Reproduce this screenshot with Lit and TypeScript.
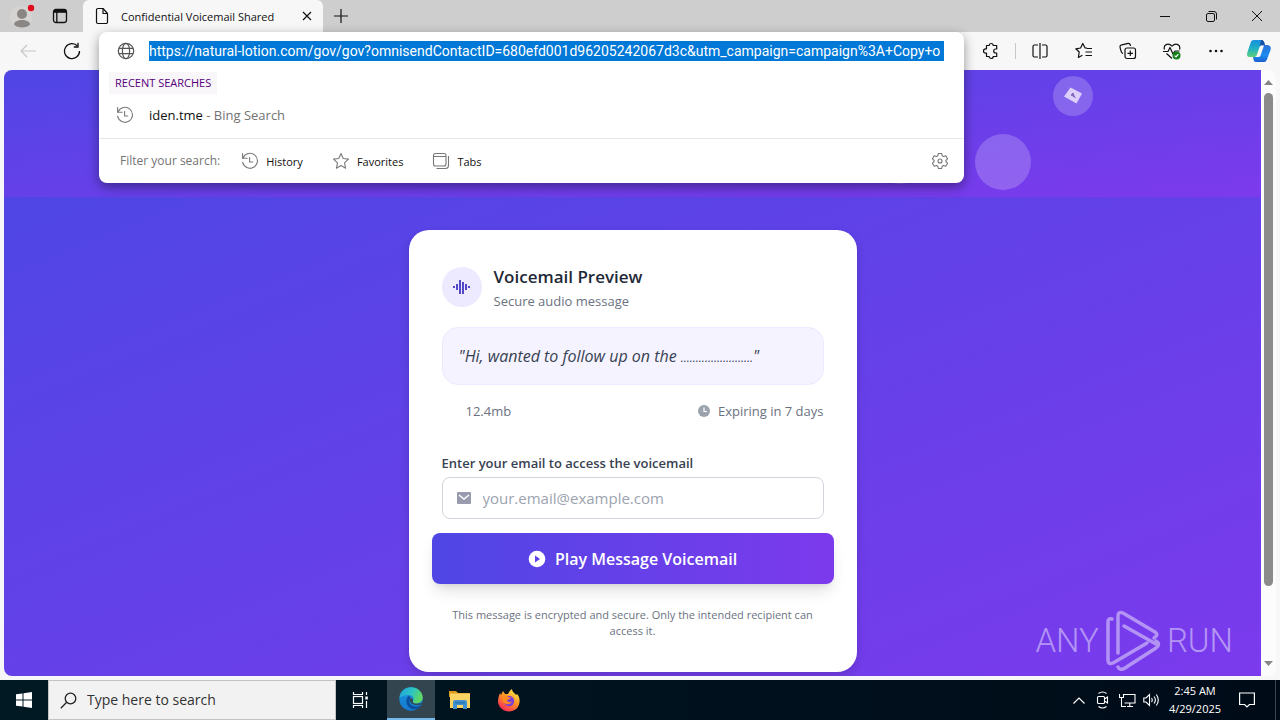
import { LitElement, html, css, svg } from "lit";
import { customElement } from "lit/decorators.js";

const historyIcon = () => svg`<svg viewBox="0 0 18 18" width="18" height="18" fill="none" stroke="#7a7a7a" stroke-width="1.1" stroke-linecap="round" stroke-linejoin="round"><path d="M1.6 1.6V6.200h4.600"/><path d="M2 6A7.500 7.500 0 1 1 1.600 10.200"/><path d="M8.600 5.500V10h3.200"/></svg>`;

@customElement("browser-titlebar")
export class BrowserTitlebar extends LitElement {
  static styles = css`
    :host { display: flex; height: 32px; background: #cecece; font: 11px "Open Sans", sans-serif; color: #111; }
    button { border: 0; padding: 0; background: none; display: flex; align-items: center; justify-content: center; }
    .profile { width: 36px; margin-left: 4px; }
    .tabs-menu { width: 40px; margin-right: 3px; }
    .tab { display: flex; align-items: center; width: 240px; background: #f7f7f7; border-radius: 6px 6px 0 0; padding-left: 12px; box-sizing: border-box; }
    .name { flex: 1; margin-left: 12px; white-space: nowrap; }
    .close { width: 32px; height: 32px; }
    .add { width: 36px; }
    .space { flex: 1; }
    .win { width: 46px; }
  `;
  render() {
    return html`
      <button class="profile" aria-label="Profile"><svg width="26" height="30" viewBox="0 0 26 30"><circle cx="12" cy="16" r="11" fill="#d6d4d2"/><circle cx="13" cy="13" r="5" fill="#8a8684"/><path d="M5 23.500c0-6 16-6 16 0-3 4-13 4-16 0z" fill="#8a8684"/><circle cx="22" cy="7" r="3.200" fill="#e00b1c"/></svg></button>
      <button class="tabs-menu" aria-label="Tab actions"><svg width="16" height="16" viewBox="0 0 16 16" fill="none" stroke="#111" stroke-width="1.300"><rect x="1.500" y="1.500" width="13" height="13" rx="2.500"/><path d="M2 3.200h12" stroke-width="3.200"/><path d="M4.800 4v10"/></svg></button>
      <div class="tab">
        <svg width="14" height="18" viewBox="0 0 14 18" fill="none" stroke="#111" stroke-width="1.200" stroke-linejoin="round"><path d="M3 1.500h5l4.500 5V15a1.500 1.500 0 0 1-1.500 1.500H3A1.500 1.500 0 0 1 1.500 15V3A1.500 1.500 0 0 1 3 1.500z"/><path d="M8 1.500V6.500h4.500"/></svg>
        <span class="name">Confidential Voicemail Shared</span>
        <button class="close" aria-label="Close tab"><svg width="10" height="10" viewBox="0 0 10 10" stroke="#111" stroke-width="1.200"><path d="M1 1l8 8M9 1L1 9"/></svg></button>
      </div>
      <button class="add" aria-label="New tab"><svg width="14" height="14" viewBox="0 0 14 14" stroke="#111" stroke-width="1.200"><path d="M7 0v14M0 7h14"/></svg></button>
      <div class="space"></div>
      <button class="win" aria-label="Minimize"><svg width="10" height="10" viewBox="0 0 10 10" stroke="#111"><path d="M0 5.500h10"/></svg></button>
      <button class="win" aria-label="Restore"><svg width="11" height="11" viewBox="0 0 11 11" stroke="#111" fill="none"><rect x="0.500" y="2.500" width="8" height="8" rx="1.500"/><path d="M2.500 .5H8a2.500 2.500 0 0 1 2.500 2.500v5.500"/></svg></button>
      <button class="win" aria-label="Close"><svg width="10" height="10" viewBox="0 0 10 10" stroke="#111"><path d="M0 0l10 10M10 0L0 10"/></svg></button>
    `;
  }
}

@customElement("browser-toolbar")
export class BrowserToolbar extends LitElement {
  static styles = css`
    :host { display: flex; align-items: center; height: 38px; background: #f7f7f7; }
    button { border: 0; padding: 0; background: none; height: 36px; display: flex; align-items: center; justify-content: center; }
    .nav { width: 44px; }
    .back { margin-left: 6px; }
    .space { flex: 1; }
    .tool { width: 44px; }
    .rule { width: 1px; height: 16px; background: #c8c8c8; margin: 0 2px 0 2px; }
    .copilot { width: 42px; }
  `;
  render() {
    return html`
      <button class="nav back" aria-label="Back"><svg width="16" height="14" viewBox="0 0 16 14" fill="none" stroke="#c6c6c6" stroke-width="1.200"><path d="M16 7H1M7 1L1 7l6 6"/></svg></button>
      <button class="nav" aria-label="Refresh"><svg width="18" height="18" viewBox="0 0 18 18" fill="none" stroke="#111" stroke-width="1.300"><path d="M16.500 9A7.500 7.500 0 1 1 14.500 4"/><path d="M15 .8V5h-4.200"/></svg></button>
      <div class="space"></div>
      <button class="tool" aria-label="Extensions"><svg width="18" height="18" viewBox="0 0 18 18" fill="none" stroke="#111" stroke-width="1.200" stroke-linejoin="round"><path d="M4.500 3.500H7.200a2 2 0 1 1 4 0h3.500V7h-1a2 2 0 1 0 0 4h1v3.500h-3.500a2 2 0 1 1-4 0H4.500V11.200h-.8a2.200 2.200 0 1 1 0-4.400h.8z"/></svg></button>
      <div class="rule"></div>
      <button class="tool" aria-label="Split screen"><svg width="16" height="18" viewBox="0 0 16 18" fill="none" stroke="#111" stroke-width="1.200"><path d="M6 3H2.500Q1 3 1 4.500v9Q1 15 2.500 15H6M10 3h3.500Q15 3 15 4.500v9q0 1.500-1.500 1.500H10M8 1v16"/></svg></button>
      <button class="tool" aria-label="Favorites"><svg width="18" height="18" viewBox="0 0 18 18" fill="none" stroke="#111" stroke-width="1.200" stroke-linejoin="round"><path d="M12 6.200l-2-.4L7.800 1.500 5.600 6l-4.800.8L4.200 10 3.400 15.500l4-2.200M12 6.500h5M10.500 10H17M10.500 13.500H17"/></svg></button>
      <button class="tool" aria-label="Collections"><svg width="18" height="18" viewBox="0 0 18 18" fill="none" stroke="#111" stroke-width="1.200"><rect x="6" y="6" width="10.500" height="10.500" rx="2"/><path d="M11.300 8.500v5.500M8.500 11.300H14M4 11.500C2 11.500 1 5 1 4.500 1 3 2 3 3 2.800L9 1.300c1.500-.2 2.200.5 2.600 2.500"/></svg></button>
      <button class="tool" aria-label="Browser essentials"><svg width="18" height="18" viewBox="0 0 18 18" fill="none" stroke="#111" stroke-width="1.200" stroke-linejoin="round"><path d="M1.500 7.500C0 3 5 .2 9 4.200 13 .2 18 3 16.500 7.500M3.500 11.500L9 16.500M0 9.500h5l2-4 3 6.500 2-3h4.500"/><circle cx="13.500" cy="13.500" r="4" fill="#13801a" stroke="none"/><path d="M11.600 13.600l1.400 1.300 2.400-2.700" stroke="#fff"/></svg></button>
      <button class="tool" aria-label="Settings and more"><svg width="14" height="4" viewBox="0 0 14 4" fill="#111"><circle cx="1.500" cy="2" r="1.300"/><circle cx="7" cy="2" r="1.300"/><circle cx="12.500" cy="2" r="1.300"/></svg></button>
      <button class="copilot" aria-label="Copilot"><svg width="24" height="24" viewBox="0 0 24 24"><defs><linearGradient id="ca" x1="0" y1="0" x2="0" y2="1"><stop offset="0" stop-color="#1a8fe0"/><stop offset=".5" stop-color="#1fb0c4"/><stop offset="1" stop-color="#5fd07a"/></linearGradient><linearGradient id="cb" x1="0" y1="0" x2="0" y2="1"><stop offset="0" stop-color="#2b6fd8"/><stop offset=".6" stop-color="#1c8df2"/><stop offset="1" stop-color="#1a5fd0"/></linearGradient></defs><path d="M14 6h6c3 0 4.500 2 3.500 5l-3 8c-.7 2-1.500 4-3.500 4H9c-2 0-2.500-2-3-5h3z" fill="url(#cb)"/><path d="M7 1h8c1 0 1.500 1 1 2.500L11.500 16c-.6 1.500-1.500 2-3 2H3c-3 0-3.500-2-2.500-5l3-9C4 2 5 1 7 1z" fill="url(#ca)"/><path d="M14 1c2.500 0 3.500 1.500 4 5h-3c-1.500 0-2 .5-2.500 2z" fill="#174ea8"/><path d="M14.500 6.500H17l-3.500 10q-.5 1.500-2 1.500H8q1.500-1 2-2.500l2.500-7.500q.5-1.500 2-1.500z" fill="#f7f7f7"/></svg></button>
    `;
  }
}

@customElement("address-popup")
export class AddressPopup extends LitElement {
  static styles = css`
    :host { display: block; background: #fff; border-radius: 8px; box-shadow: 0 4px 12px rgba(0, 0, 0, .4); font: 13px/20px "Open Sans", sans-serif; color: #111; }
    .url { display: flex; align-items: center; height: 38px; padding: 0 20px 0 18px; }
    .url input { flex: 1; min-width: 0; height: 20px; margin-left: 14px; padding: 0; border: 0; outline: 0; background: #0078d7; color: #fff; font: 14px/20px "Roboto", sans-serif; }
    h2 { margin: 2px 0 0 10px; padding: 0 6px; width: fit-content; background: #f8f6f9; font-size: 11px; line-height: 22px; font-weight: 400; color: #56007a; }
    svg { flex: none; }
    .result { display: flex; align-items: center; height: 42px; margin-bottom: 2px; padding-left: 17px; color: #111; text-decoration: none; }
    .result svg { margin-right: 15px; }
    .muted { color: #737373; }
    .filters { display: flex; align-items: center; height: 44px; padding: 0 15px 0 21px; border-top: 1px solid #e8e8e8; }
    .filters .muted { font-size: 12px; }
    button { display: flex; align-items: center; border: 0; padding: 0; background: none; font: 11px "Open Sans", sans-serif; color: #111; gap: 7px; }
    .filter { margin-left: 21px; margin-right: 8px; }
    .gear { margin-left: auto; }
  `;
  render() {
    return html`
      <div class="url">
        <svg width="18" height="18" viewBox="0 0 18 18" fill="none" stroke="#555" stroke-width="1.200"><circle cx="9" cy="9" r="7.700"/><ellipse cx="9" cy="9" rx="3.600" ry="7.700"/><path d="M2 6.300h14M2 11.700h14"/></svg>
        <input aria-label="Address" .value=${"https://natural-lotion.com/gov/gov?omnisendContactID=680efd001d96205242067d3c&utm_campaign=campaign%3A+Copy+o"}>
      </div>
      <h2>RECENT SEARCHES</h2>
      <a class="result" href="#">${historyIcon()}<span>iden.tme <span class="muted">- Bing Search</span></span></a>
      <div class="filters">
        <span class="muted">Filter your search:</span>
        <button class="filter">${historyIcon()}History</button>
        <button class="filter"><svg width="18" height="18" viewBox="0 0 18 18" fill="none" stroke="#7a7a7a" stroke-width="1.100" stroke-linejoin="round"><path d="M9 1.500l2.200 5 5.300.6-4 3.700 1.100 5.400L9 13.500l-4.600 2.700 1.100-5.400-4-3.700 5.300-.6z"/></svg>Favorites</button>
        <button class="filter"><svg width="18" height="18" viewBox="0 0 18 18" fill="none" stroke="#777" stroke-width="1.100"><rect x="1.500" y="1.500" width="12.500" height="12.500" rx="2"/><path d="M1.500 4.500H14M16.500 4v9.500a3 3 0 0 1-3 3H4.500"/></svg>Tabs</button>
        <button class="gear" aria-label="Search settings"><svg width="18" height="18" viewBox="0 0 18 18" fill="none" stroke="#777" stroke-width="1.100" stroke-linejoin="round"><path d="M7.300 1.500h3.400l.5 2.300 1.300.8 2.300-.8 1.700 3L15 8.300v1.400l1.500 1.500-1.700 3-2.300-.8-1.300.8-.5 2.300H7.300l-.5-2.300-1.300-.8-2.300.8-1.700-3L3 9.700V8.300L1.500 6.800l1.700-3 2.300.8 1.300-.8z"/><circle cx="9" cy="9" r="2"/></svg></button>
      </div>
    `;
  }
}

@customElement("voicemail-page")
export class VoicemailPage extends LitElement {
  static styles = css`
    :host { display: flex; flex-direction: column; overflow: hidden; position: relative; font: 13px/20px "Open Sans", sans-serif; color: #6b7280; }
    .hero { position: relative; flex: none; height: 127px; background: linear-gradient(to bottom right, #4f46e5, #7c3aed); }
    .bubble { position: absolute; border-radius: 50%; background: rgba(255, 255, 255, .2); display: flex; align-items: center; justify-content: center; }
    .one { width: 40px; height: 40px; top: 6px; right: 168px; }
    .two { width: 56px; height: 56px; top: 64px; right: 230px; }
    .three { width: 48px; height: 48px; top: 66px; right: 337px; }
    .body { flex: 1 0 auto; padding: 33px 16px; display: flex; justify-content: center; align-items: flex-start; background: linear-gradient(to bottom right, #4f46e5, #7c3aed); }
    .card { box-sizing: border-box; width: 100%; max-width: 448px; padding: 33px; border-radius: 20px; background: #fff; box-shadow: 0 4px 10px rgba(0, 0, 0, .15); }
    .head { display: flex; align-items: center; gap: 12px; }
    .disc { width: 40px; height: 40px; border-radius: 50%; background: #ede9fe; display: flex; align-items: center; justify-content: center; }
    h1 { margin: 0; font-size: 17px; line-height: 28px; font-weight: 600; color: #1f2937; }
    p { margin: 0; }
    .quote { margin: 16px 0; padding: 16px; border: 1px solid #ede9fe; border-radius: 16px; background: #f5f3ff; font-size: 16px; line-height: 24px; font-style: italic; color: #374151; }
    .dots { font-size: 12px; line-height: 16px; }
    .meta { display: flex; justify-content: space-between; padding-left: 24px; margin-bottom: 32px; }
    .expiry { display: flex; align-items: center; gap: 8px; }
    label { display: block; font-weight: 600; color: #374151; }
    .field { display: flex; align-items: center; gap: 12px; box-sizing: border-box; height: 42px; margin-top: 4px; padding: 0 14px; border: 1px solid #d1d5db; border-radius: 8px; }
    .field input { flex: 1; min-width: 0; border: 0; outline: 0; padding: 0; background: none; font: 15px/24px "Open Sans", sans-serif; color: #374151; }
    .field input::placeholder { color: #9ca3af; }
    .play { display: flex; align-items: center; justify-content: center; gap: 9px; height: 51px; width: calc(100% + 20px); margin: 14px -10px 23px; padding: 0; border: 0; border-radius: 8px; background: linear-gradient(90deg, #4f46e5, #7c3aed); box-shadow: 0 10px 15px -3px rgba(0, 0, 0, .12), 0 4px 6px -4px rgba(0, 0, 0, .12); color: #fff; font: 600 16px/24px "Open Sans", sans-serif; }
    .note { text-align: center; font-size: 11px; line-height: 16px; }
    .brand { position: absolute; right: 28px; bottom: 4px; display: flex; align-items: center; gap: 6px; font: 300 33px/62px "Roboto", sans-serif; color: #b394f4; }
  `;
  render() {
    return html`
      <div class="hero">
        <div class="bubble one"><svg width="22" height="22" viewBox="0 0 22 22"><path d="M8.500 2.500L20 8.500 14.500 18.500 2 11.500z" fill="#dccffb"/><path d="M9 10l2-2 1.500 4-1.500-1zM12 11l1.500 2" fill="#8264bd" stroke="#8264bd"/></svg></div>
        <div class="bubble two"></div>
        <div class="bubble three"></div>
      </div>
      <div class="body">
        <div class="card">
          <div class="head">
            <div class="disc"><svg width="18" height="16" viewBox="0 0 18 16" stroke="#5348c8" stroke-width="2"><path d="M1 7v2M4 5v6M7 1v14M10 3v12M13 5v6M16 7v2"/></svg></div>
            <div><h1>Voicemail Preview</h1><p>Secure audio message</p></div>
          </div>
          <p class="quote">"Hi, wanted to follow up on the <span class="dots">........................</span>"</p>
          <div class="meta"><span>12.4mb</span><span class="expiry"><svg width="12" height="12" viewBox="0 0 12 12"><circle cx="6" cy="6" r="6" fill="#9ca3af"/><path d="M6 2.500V6.500h3" fill="none" stroke="#fff" stroke-width="1.200"/></svg>Expiring in 7 days</span></div>
          <label for="email">Enter your email to access the voicemail</label>
          <div class="field"><svg width="14" height="12" viewBox="0 0 14 12"><rect width="14" height="12" rx="1" fill="#9a9cae"/><path d="M2 3l5 4 5-4" fill="none" stroke="#fff" stroke-width="1.500"/></svg><input id="email" type="email" placeholder="your.email@example.com"></div>
          <button class="play"><svg width="18" height="18" viewBox="0 0 18 18"><circle cx="9" cy="9" r="8.300" fill="#fff"/><path d="M7 5.600L12 9l-5 3.400z" fill="#6140e8"/></svg>Play Message Voicemail</button>
          <p class="note">This message is encrypted and secure. Only the intended recipient can access it.</p>
        </div>
      </div>
      <div class="brand"><span>ANY</span><svg width="56" height="62" viewBox="0 0 56 62" fill="none" stroke="#b394f4" stroke-width="3.500" stroke-linejoin="round" stroke-linecap="round"><path d="M7 9Q3 8 3 12V50Q3 55 8 53L42 33"/><path d="M13 43V6Q13 1 18 3L50 22Q54 25 49 28"/><path d="M19 16L51 34"/><path d="M13 57Q15 61 20 58L51 38Q56 34 51 31"/></svg><span>RUN</span></div>
    `;
  }
}

@customElement("task-bar")
export class TaskBar extends LitElement {
  static styles = css`
    :host { display: flex; height: 40px; background: linear-gradient(90deg, #001923, #000b18); color: #fff; font: 12px/18px "Open Sans", sans-serif; }
    button { border: 0; padding: 0; background: none; display: flex; align-items: center; justify-content: center; color: inherit; font: inherit; }
    .apps { display: flex; gap: 1px; }
    .app { width: 48px; }
    .active { background: #33464f; border-bottom: 2px solid #76b9ed; }
    .view { width: 48px; margin-right: 3px; }
    .search { display: flex; align-items: center; box-sizing: border-box; width: 288px; padding-left: 11px; gap: 10px; background: #f2f2f2; border: 1px solid #c4c4c4; }
    .search input { flex: 1; min-width: 0; border: 0; outline: 0; padding: 0; background: none; font: 14px/20px "Open Sans", sans-serif; }
    .search input::placeholder { color: #333; }
    .space { flex: 1; }
    .tray { width: 24px; }
    .clock { width: 64px; flex-direction: column; font-size: 11px; }
    .notes { width: 40px; padding-right: 0; }
    .desktop { width: 5px; margin-left: 8px; border-left: 1px solid #3c4650; }
  `;
  render() {
    return html`
      <button class="app" aria-label="Start"><svg width="16" height="16" viewBox="0 0 16 16" fill="#fff"><path d="M0 2.300l6.500-.9v6.100H0zM7.500 1.200L16 0v7.500H7.500zM0 8.500h6.500v6.100L0 13.700zM7.500 8.500H16V16l-8.500-1.200z"/></svg></button>
      <label class="search"><svg width="17" height="17" viewBox="0 0 17 17" fill="none" stroke="#222" stroke-width="1.300"><circle cx="10.500" cy="6.500" r="5.300"/><path d="M6.700 10.300L.8 16.200"/></svg><input type="text" aria-label="Search" placeholder="Type here to search"></label>
      <button class="view" aria-label="Task view"><svg width="17" height="16" viewBox="0 0 17 16" fill="none" stroke="#fff" stroke-width="1.200"><path d="M1.500 0v2.500h9V0M1.500 16v-2.500h9V16M14.500 0v3M14.500 9v7"/><rect x="1.500" y="4.500" width="9" height="7"/><rect x="13.300" y="4.500" width="2.500" height="3" fill="#fff" stroke="none"/></svg></button>
      <div class="apps">
      <button class="app active" aria-label="Microsoft Edge"><svg width="24" height="24" viewBox="0 0 24 24"><defs><linearGradient id="ea" x1="0" y1="0" x2="1" y2=".4"><stop offset="0" stop-color="#1f9de0"/><stop offset=".55" stop-color="#2cc4c4"/><stop offset="1" stop-color="#5fd862"/></linearGradient><linearGradient id="eb" x1="0" y1="0" x2="0" y2="1"><stop offset="0" stop-color="#1b96dd"/><stop offset="1" stop-color="#1478cf"/></linearGradient></defs><circle cx="12" cy="12" r="11.700" fill="url(#eb)"/><path d="M.5 11C1 4 6 .3 12 .3c7 0 11.700 5 11.700 10 0 4-3 6.200-6.500 6.200-2.700 0-4.200-1-3.200-2.500 1.500-2.500 0-6-4-6C5 8 1 10 .5 11z" fill="url(#ea)"/><path d="M9 9.500c-3 3-2 9.500 3 12 4 1.500 8 .3 10-3-7 3-12.500-1-11.500-5 .3-1.500 1-2 1-3s-1.500-1.700-2.500-1z" fill="#0c4f9c"/><path d="M11 12c-1 4 4 7.500 11 5.500l1-2c-3 2-11 1.500-9-1.500.7-1-2-4-3-2z" fill="#33464f"/></svg></button>
      <button class="app" aria-label="File Explorer"><svg width="22" height="20" viewBox="0 0 22 20"><path d="M0 1h7l2 2h12v4H0z" fill="#dc9a1c"/><path d="M1 3.500h20V18H1z" fill="#fbd464"/><path d="M4 19v-7q0-2 2-2h10q2 0 2 2v7h-4v-4H8v4z" fill="#3f91cf"/><path d="M6 12h10v1.500H6z" fill="#2c72b0"/></svg></button>
      <button class="app" aria-label="Firefox"><svg width="24" height="24" viewBox="0 0 24 24"><defs><linearGradient id="fa" x1=".8" y1="0" x2=".2" y2="1"><stop offset="0" stop-color="#fff04a"/><stop offset=".45" stop-color="#ff9326"/><stop offset="1" stop-color="#f5205d"/></linearGradient></defs><path d="M3 5l1 2 2-4 2 3h3c1-2 2-4 4-5 0 3 3 4 4 6l1-1c2 2 3 5 2.500 8C22 20 17.500 23.500 12 23.500S1 19 1 13c0-3 1-5 2-8z" fill="url(#fa)"/><circle cx="12" cy="13" r="5.200" fill="#7a3fd6"/><path d="M5 8c2-1.500 5-1 6 1l3 .5c-1 2-3 1.500-4 2.500 0 2 3 3 5 1.500-1 3-6 4-8.500 1C5 12.500 4.500 10 5 8z" fill="#ff8a22"/></svg></button>
      </div>
      <div class="space"></div>
      <button class="tray" aria-label="Show hidden icons"><svg width="12" height="7" viewBox="0 0 12 7" fill="none" stroke="#fff" stroke-width="1.200"><path d="M.5 6.500L6 1l5.500 5.500"/></svg></button>
      <button class="tray" aria-label="Meet now"><svg width="14" height="18" viewBox="0 0 14 18" fill="none" stroke="#fff" stroke-width="1.100"><rect x="1.500" y="5.500" width="7" height="7" rx="1"/><path d="M8.500 8l3-2v6l-3-2M2.500 2.500Q6.500-.5 10.500 2.500M2.500 15.500Q6.500 18.500 10.500 15.500"/></svg></button>
      <button class="tray" aria-label="Network"><svg width="17" height="14" viewBox="0 0 17 14" fill="none" stroke="#fff" stroke-width="1.100"><path d="M5 1.500h11v8.500H5.500M8 13.500h6M10.800 10v3.500M2.500 5v8.500H7"/><path d="M.5 1v3.500h4V1"/></svg></button>
      <button class="tray" aria-label="Volume"><svg width="17" height="14" viewBox="0 0 17 14" fill="none" stroke="#fff" stroke-width="1.100"><path d="M.8 5v4H3l3.500 3.500v-11L3 5zM8.500 5q1.500 2 0 4M11 3.500q2.800 3.500 0 7M13.300 1.500q4 5.500 0 11"/></svg></button>
      <button class="clock"><span>2:45 AM</span><span>4/29/2025</span></button>
      <button class="notes" aria-label="Notifications"><svg width="16" height="16" viewBox="0 0 16 16" fill="none" stroke="#fff" stroke-width="1.200"><path d="M.6 1h14.800v11.500h-5L8 15l-2.400-2.500h-5z"/></svg></button>
      <button class="desktop" aria-label="Show desktop"></button>
    `;
  }
}

@customElement("app-root")
export class AppRoot extends LitElement {
  static styles = css`
    :host { display: flex; flex-direction: column; height: 100vh; position: relative; overflow: hidden; background: #f7f7f7; }
    .view { flex: 1; min-height: 0; display: flex; margin: 0 4px 4px; border-radius: 8px; overflow: hidden; background: #fcfcfc; }
    voicemail-page { flex: 1; min-width: 0; }
    .scroll { width: 15px; box-sizing: border-box; padding: 9px 3px; display: flex; flex-direction: column; align-items: center; gap: 8px; }
    .track { flex: 1; display: flex; flex-direction: column; width: 9px; }
    .thumb { height: 88%; border-radius: 5px; background: #8b8b8b; }
    address-popup { position: absolute; top: 32px; left: 99px; right: 316px; }
  `;
  render() {
    return html`
      <browser-titlebar></browser-titlebar>
      <browser-toolbar></browser-toolbar>
      <div class="view">
        <voicemail-page></voicemail-page>
        <div class="scroll">
          <svg width="9" height="6" viewBox="0 0 9 6" fill="#858585"><path d="M0 6l4.500-5L9 6z"/></svg>
          <div class="track"><div class="thumb"></div></div>
          <svg width="9" height="6" viewBox="0 0 9 6" fill="#858585"><path d="M0 0l4.500 5L9 0z"/></svg>
        </div>
      </div>
      <task-bar></task-bar>
      <address-popup></address-popup>
    `;
  }
}
